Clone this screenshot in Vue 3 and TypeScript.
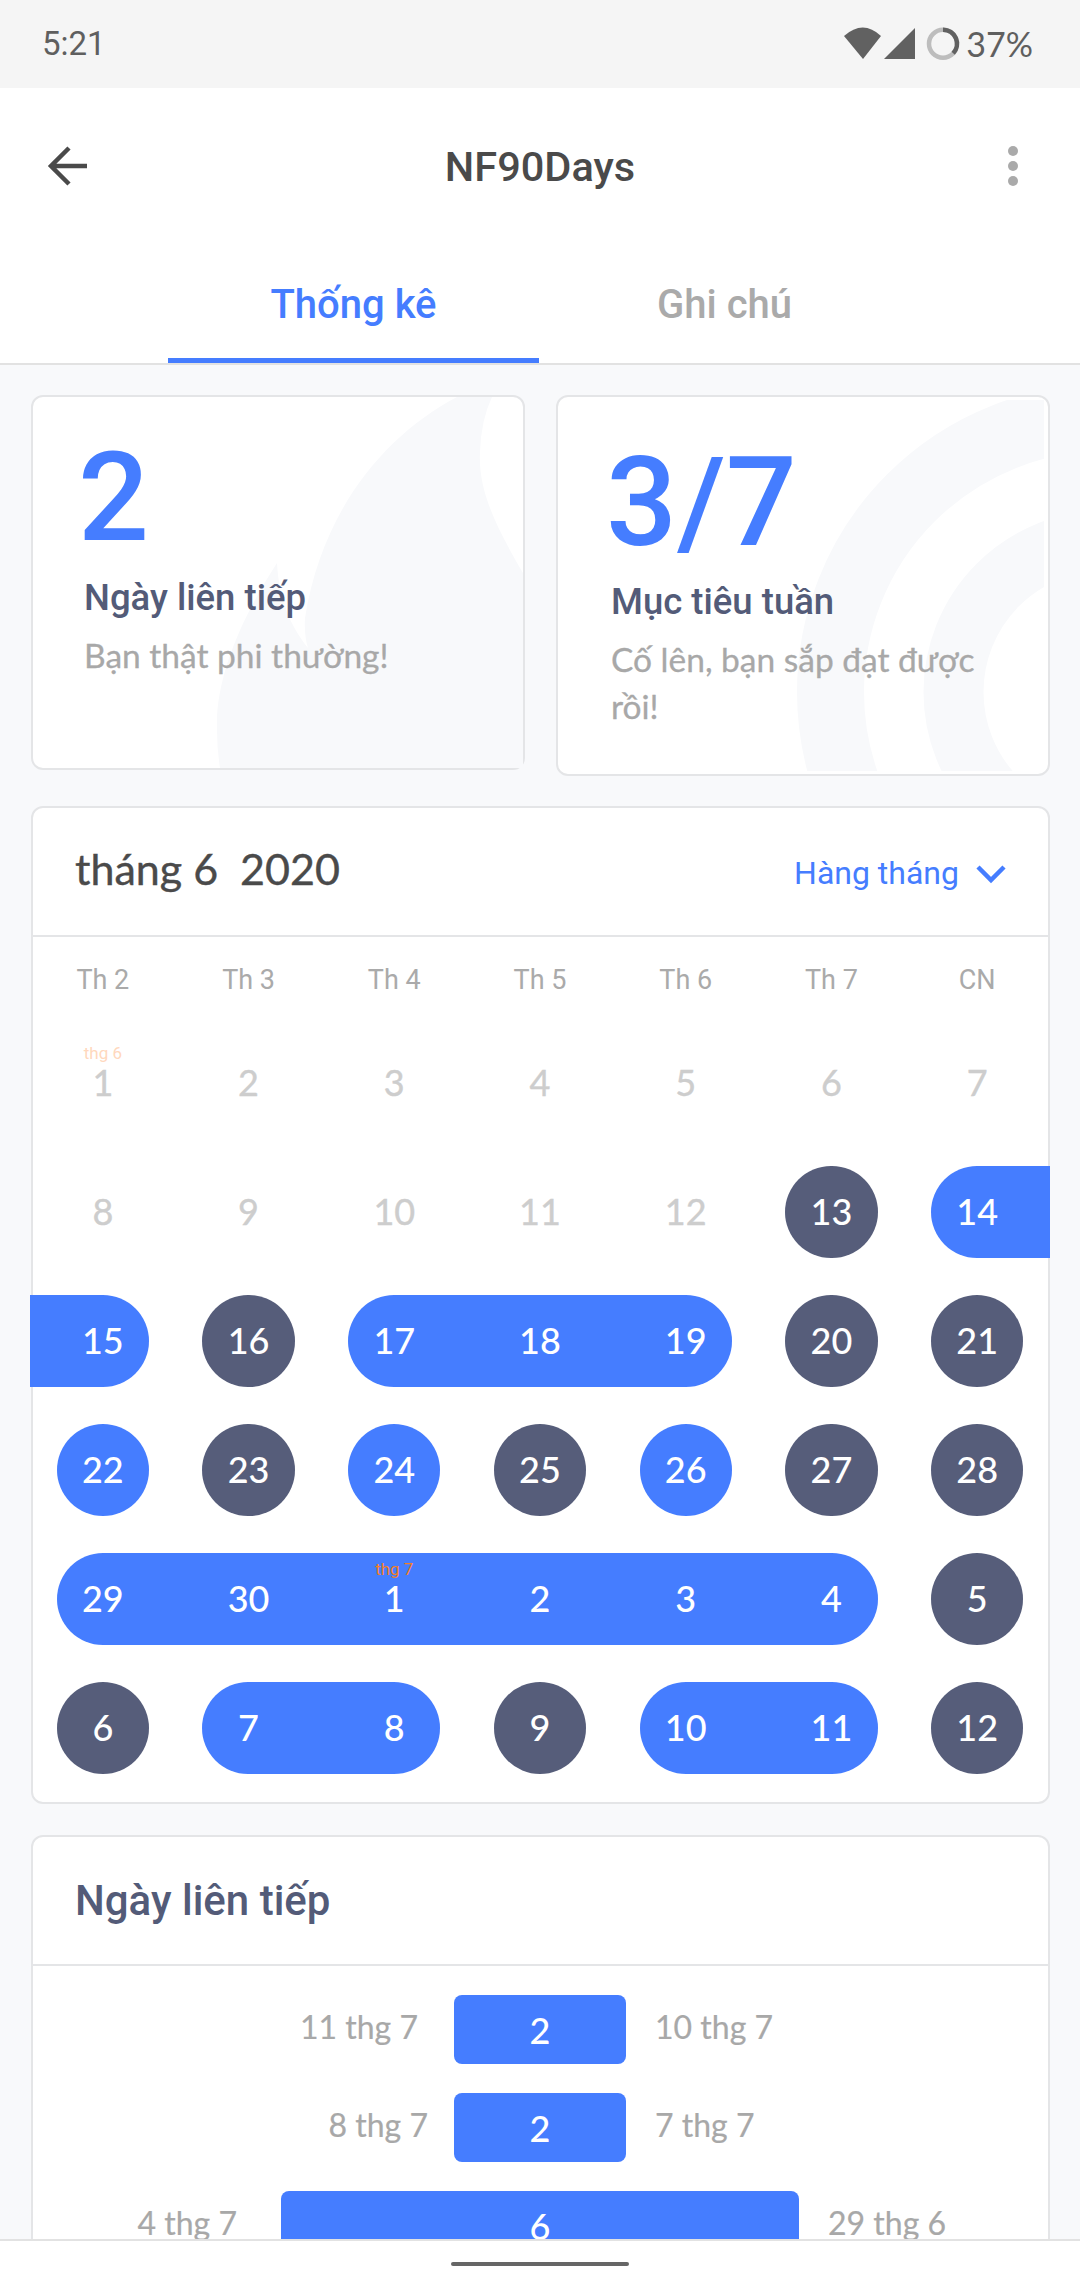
<script setup lang="ts">
type Tone = 'muted' | 'dark' | 'blue'
type Pos = 'single' | 'start' | 'mid' | 'end'
interface Day { n: number; tone: Tone; pos: Pos; tag?: string; tagClass?: string }

const weekdays: string[] = ['Th 2', 'Th 3', 'Th 4', 'Th 5', 'Th 6', 'Th 7', 'CN']
const m = (n: number): Day => ({ n, tone: 'muted', pos: 'single' })
const d = (n: number): Day => ({ n, tone: 'dark', pos: 'single' })
const b = (n: number, pos: Pos = 'single'): Day => ({ n, tone: 'blue', pos })

const days: Day[] = [
  { ...m(1), tag: 'thg 6', tagClass: 'tag-light' }, m(2), m(3), m(4), m(5), m(6), m(7),
  m(8), m(9), m(10), m(11), m(12), d(13), b(14, 'start'),
  b(15, 'end'), d(16), b(17, 'start'), b(18, 'mid'), b(19, 'end'), d(20), d(21),
  b(22), d(23), b(24), d(25), b(26), d(27), d(28),
  b(29, 'start'), b(30, 'mid'), { ...b(1, 'mid'), tag: 'thg 7', tagClass: 'tag-strong' }, b(2, 'mid'), b(3, 'mid'), b(4, 'end'), d(5),
  d(6), b(7, 'start'), b(8, 'end'), d(9), b(10, 'start'), b(11, 'end'), d(12),
]

interface Streak { from: string; to: string; value: number; width: number; gapL: number; gapR: number }
const streaks: Streak[] = [
  { from: '11 thg 7', to: '10 thg 7', value: 2, width: 172, gapL: 36, gapR: 29 },
  { from: '8 thg 7', to: '7 thg 7', value: 2, width: 172, gapL: 26, gapR: 29 },
  { from: '4 thg 7', to: '29 thg 6', value: 6, width: 518, gapL: 44, gapR: 29 },
]
</script>

<template>
  <div class="phone">
    <div class="status">
      <span class="time">5:21</span>
      <div class="status-right">
        <svg class="status-icons" width="118" height="36" viewBox="844 26 118 36">
          <path d="M844 36 Q863 19 881 36 L863 59 Z" fill="#616161" />
          <path d="M884 59 L915 28 V59 Z" fill="#616161" />
          <circle cx="943" cy="43.7" r="14" fill="none" stroke="#bdbdbd" stroke-width="4.5" />
          <path d="M943 29.7 A14 14 0 0 1 953.2 53.3" fill="none" stroke="#616161" stroke-width="4.5" />
        </svg>
        <span class="pct">37%</span>
      </div>
    </div>

    <header class="top">
      <div class="toolbar">
        <svg class="back" width="44" height="42" viewBox="0 0 44 42">
          <path d="M44 21 H8 M26 3 L8 21 L26 39" fill="none" stroke="#4a4a4a" stroke-width="4.5" />
        </svg>
        <h1 class="title">NF90Days</h1>
        <div class="more"><i></i><i></i><i></i></div>
      </div>
      <div class="tabs">
        <div class="tab active">Thống kê</div>
        <div class="tab">Ghi chú</div>
      </div>
    </header>

    <main class="scroll">
      <div class="summary">
        <section class="card stat stat-a">
          <svg class="deco" width="494" height="375" viewBox="31 395 494 375">
            <path
              d="M457 397 C385 435 322 510 305 618 Q304 635 308 648 C290 625 279 600 277 563 C240 620 215 680 217 730 Q217 750 220 768 L523 768 L523 573 C495 525 478 490 480 452 Q481 420 492 397 Z"
              fill="#f8f9fb"
            />
          </svg>
          <div class="big">2</div>
          <div class="stat-title">Ngày liên tiếp</div>
          <div class="stat-sub">Bạn thật phi thường!</div>
        </section>
        <section class="card stat stat-b">
          <svg class="deco" width="494" height="381" viewBox="556 395 494 381">
            <defs>
              <clipPath id="ringClip"><rect x="556" y="400" width="488" height="371" /></clipPath>
            </defs>
            <g clip-path="url(#ringClip)" fill="none" stroke="#f8f9fb">
              <circle cx="1105" cy="692" r="274.5" stroke-width="67" />
              <circle cx="1105" cy="692" r="151.5" stroke-width="60" />
            </g>
          </svg>
          <div class="big">3/7</div>
          <div class="stat-title">Mục tiêu tuần</div>
          <div class="stat-sub">Cố lên, bạn sắp đạt được rồi!</div>
        </section>
      </div>

      <section class="card calendar">
        <div class="card-head">
          <div class="month">tháng 6&nbsp;&nbsp;2020</div>
          <div class="mode">
            <span>Hàng tháng</span>
            <svg width="30" height="20" viewBox="0 0 30 20">
              <path d="M2 3 L15 16 L28 3" fill="none" stroke="#457dff" stroke-width="4.5" />
            </svg>
          </div>
        </div>
        <div class="cal-body">
          <div class="grid week">
            <div v-for="w in weekdays" :key="w" class="wd">{{ w }}</div>
          </div>
          <div class="grid month-grid">
            <div
              v-for="(day, i) in days"
              :key="i"
              class="cell"
              :class="[day.tone, day.tone === 'muted' ? '' : day.pos]"
            >
              <span v-if="day.tag" class="tag" :class="day.tagClass">{{ day.tag }}</span>
              {{ day.n }}
            </div>
          </div>
        </div>
      </section>

      <section class="card streak">
        <div class="card-head">
          <div class="streak-title">Ngày liên tiếp</div>
        </div>
        <div class="bars">
          <div v-for="s in streaks" :key="s.from" class="bar-row">
            <span class="lab lab-l" :style="{ marginRight: s.gapL + 'px' }">{{ s.from }}</span>
            <div class="bar" :style="{ width: s.width + 'px' }">{{ s.value }}</div>
            <span class="lab lab-r" :style="{ marginLeft: s.gapR + 'px' }">{{ s.to }}</span>
          </div>
        </div>
      </section>
    </main>

    <footer class="nav"><div class="handle"></div></footer>
  </div>
</template>

<style scoped>
.phone {
  width: 1080px;
  height: 2280px;
  display: flex;
  flex-direction: column;
  overflow: hidden;
  background: #f8f9fb;
  font-family: Roboto, sans-serif;
}
.status {
  height: 88px;
  flex: none;
  background: #f5f5f5;
  display: flex;
  align-items: center;
  justify-content: space-between;
  padding: 0 47px 0 42px;
  color: #5f5f5f;
}
.time { font-size: 33px; line-height: 88px; }
.status-right { display: flex; align-items: center; }
.status-icons { display: block; margin-right: 4px; }
.pct { font-family: Lato, sans-serif; font-size: 34px; line-height: 88px; }

.top {
  flex: none;
  background: #fff;
  border-bottom: 2px solid #e2e2e2;
}
.toolbar {
  height: 156px;
  display: grid;
  grid-template-columns: 1fr auto 1fr;
  align-items: center;
  padding: 0 62px;
}
.back { display: block; margin-left: -19px; }
.title {
  margin: 0;
  font-size: 41.5px;
  font-weight: 500;
  color: #4a4a4a;
}
.more { display: flex; flex-direction: column; gap: 5px; justify-self: end; }
.more i { width: 10px; height: 10px; border-radius: 50%; background: #aaa; display: block; }
.tabs { display: flex; justify-content: center; height: 119px; padding-right: 2px; }
.tab {
  width: 371px;
  text-align: center;
  font-size: 40px;
  font-weight: 500;
  color: #aaa;
  line-height: 122px;
  border-bottom: 5px solid transparent;
}
.tab.active { color: #457dff; border-bottom-color: #457dff; }

.scroll {
  flex: 1;
  min-height: 0;
  overflow: hidden;
  padding: 30px 30px 0 31px;
}
.summary {
  display: flex;
  justify-content: space-between;
  align-items: flex-start;
}
.card {
  position: relative;
  background: #fff;
  border: 2px solid #e4e5e7;
  border-radius: 12px;
  box-sizing: border-box;
}
.stat { width: 494px; height: 375px; padding: 38px 0 0 51px; }
.stat-b { height: 381px; padding: 43px 0 0 53px; }
.deco { position: absolute; left: -2px; top: -2px; }
.big, .stat-title, .stat-sub { position: relative; }
.big {
  font-size: 125px;
  line-height: 125px;
  font-weight: 500;
  color: #457dff;
  letter-spacing: -3px;
}
.stat-b .big { margin-left: -5px; letter-spacing: 0; }
.stat-a .big { margin-left: -6px; }
.stat-title {
  margin-top: 15px;
  font-size: 36.5px;
  line-height: 46px;
  font-weight: 500;
  color: #535b78;
}
.stat-b .stat-title { margin-top: 14px; }
.stat-sub {
  margin-top: 11px;
  font-family: Lato, sans-serif;
  font-size: 33.5px;
  line-height: 47px;
  color: #a8a8a8;
  width: 400px;
  -webkit-text-stroke: 0.3px currentColor;
}

.calendar { margin-top: 30px; height: 998px; }
.card-head {
  height: 129px;
  box-sizing: border-box;
  border-bottom: 2px solid #e4e5e7;
  display: flex;
  align-items: center;
  justify-content: space-between;
  padding: 0 42px;
}
.month {
  font-family: Lato, sans-serif;
  font-size: 43px;
  color: #4a4a4a;
  padding-bottom: 6px;
  -webkit-text-stroke: 0.4px currentColor;
}
.mode {
  display: flex;
  align-items: center;
  gap: 17px;
  color: #457dff;
  font-size: 32px;
  padding-top: 2px;
}
.mode svg { display: block; margin-top: 2px; }
.cal-body { margin: 0 -2px 0 -3px; }
.grid { display: grid; grid-template-columns: repeat(7, 1fr); }
.week { height: 100px; padding-top: 27px; box-sizing: border-box; }
.wd {
  text-align: center;
  font-size: 27px;
  line-height: 32px;
  color: #aaa;
}
.month-grid { row-gap: 37px; }
.cell {
  position: relative;
  height: 92px;
  box-sizing: border-box;
  display: flex;
  align-items: center;
  justify-content: center;
  font-family: Lato, sans-serif;
  font-size: 36px;
  padding-bottom: 2px;
}
.muted { color: #cdcdcd; -webkit-text-stroke: 0.4px currentColor; }
.dark { background: #565d7a; color: #fff; font-weight: 500; }
.blue { background: #457dff; color: #fff; font-weight: 500; }
.single { margin: 0 26.7px; border-radius: 46px; }
.start { margin-left: 26.7px; padding-right: 26.7px; border-radius: 46px 0 0 46px; }
.end { margin-right: 26.7px; padding-left: 26.7px; border-radius: 0 46px 46px 0; }
.tag {
  position: absolute;
  left: 0;
  right: 0;
  top: 6px;
  text-align: center;
  font-family: Roboto, sans-serif;
  font-size: 17px;
  line-height: 20px;
  font-weight: 400;
  -webkit-text-stroke: 0;
}
.tag-light { color: #ffd8bd; }
.tag-strong { color: #f37f26; }

.streak { margin-top: 31px; height: 700px; }
.streak-title {
  font-family: Roboto, sans-serif;
  font-weight: 500;
  font-size: 42px;
  color: #535b78;
}
.bars {
  display: flex;
  flex-direction: column;
  gap: 29px;
  padding-top: 29px;
  margin-left: -1px;
}
.bar-row {
  display: grid;
  grid-template-columns: 1fr auto 1fr;
  align-items: center;
}
.lab {
  font-family: Lato, sans-serif;
  font-size: 32px;
  color: #a8a8a8;
  padding-bottom: 6px;
  -webkit-text-stroke: 0.2px currentColor;
}
.lab-l { text-align: right; }
.bar {
  height: 69px;
  border-radius: 8px;
  background: #457dff;
  color: #fff;
  display: flex;
  align-items: center;
  justify-content: center;
  font-family: Lato, sans-serif;
  font-weight: 500;
  font-size: 36px;
}

.nav {
  flex: none;
  height: 41px;
  box-sizing: border-box;
  background: #fff;
  border-top: 2px solid #e2e2e2;
  display: flex;
  justify-content: center;
  padding-top: 21px;
  position: relative;
}
.handle { width: 178px; height: 4px; border-radius: 2px; background: #666; }
</style>
